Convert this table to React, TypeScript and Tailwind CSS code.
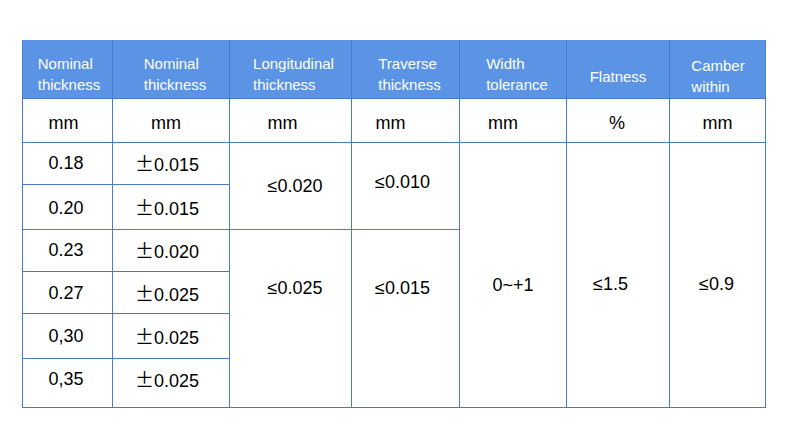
import React from "react";

const head = "flex items-center justify-center text-left bg-[#5b94e4] text-white text-[15px] leading-[21px]";
const cell = "flex items-center justify-center bg-white text-black text-[18px]";

function Pm({ v }: { v: string }) {
  return (
    <span>
      <span style={{ fontFamily: '"Noto Sans CJK SC", sans-serif' }} className="text-[19px]">±</span>
      {v}
    </span>
  );
}

export default function App() {
  const rows = [
    ["0.18", "0.015", ""],
    ["0.20", "0.015", "pt-[2px]"],
    ["0.23", "0.020", ""],
    ["0.27", "0.025", "pt-[2px]"],
    ["0,30", "0.025", "pt-[1px]"],
    ["0,35", "0.025", "pb-[7px]"],
  ];

  const units = [
    ["mm", "pr-[8px]"],
    ["mm", "pr-[10px]"],
    ["mm", "pr-[16px]"],
    ["mm", "pr-[30px]"],
    ["mm", "pr-[20px]"],
    ["%", "pr-[2px]"],
    ["mm", ""],
  ];

  return (
    <div className="w-[790px] h-[431px] bg-white pt-[40px] pl-[22px] font-['Liberation_Sans',Arial,sans-serif]">
      <div className="grid w-[744px] grid-cols-[89px_116px_121px_107px_106px_102px_95px] grid-rows-[58px_43px_41px_44px_41px_41px_44px_48px] gap-px bg-[#4a7bc8] px-px pb-px">
        {/* header */}
        <div className={head + " pt-[10px] pl-[3px]"}>Nominal<br />thickness</div>
        <div className={head + " pt-[10px] pl-[8px]"}>Nominal<br />thickness</div>
        <div className={head + " pt-[10px] pl-[6px]"}>Longitudinal<br />thickness</div>
        <div className={head + " pt-[10px] pl-[8px]"}>Traverse<br />thickness</div>
        <div className={head + " pt-[10px] pl-[8px]"}>Width<br />tolerance</div>
        <div className={head + " pt-[14px]"}>Flatness</div>
        <div className={head + " pt-[14px] pl-[1px]"}>Camber<br />within</div>

        {/* units */}
        {units.map(([u, pad], i) => (
          <div key={i} className={cell + " pt-[5px] " + pad}>{u}</div>
        ))}

        {/* first two columns */}
        {rows.map(([a, b, pad], i) => (
          <React.Fragment key={i}>
            <div className={cell + " pr-[3px] " + pad} style={{ gridColumn: 1, gridRow: i + 3 }}>{a}</div>
            <div className={cell + " pr-[8px] " + pad} style={{ gridColumn: 2, gridRow: i + 3 }}><Pm v={b} /></div>
          </React.Fragment>
        ))}

        <div className={cell + " col-start-3 row-start-3 row-span-2 pl-[9px]"}>≤0.020</div>
        <div className={cell + " col-start-4 row-start-3 row-span-2 pb-[8px] pr-[6px]"}>≤0.010</div>
        <div className={cell + " col-start-3 row-start-5 row-span-4 pb-[60px] pl-[9px]"}>≤0.025</div>
        <div className={cell + " col-start-4 row-start-5 row-span-4 pb-[60px] pr-[6px]"}>≤0.015</div>
        <div className={cell + " col-start-5 row-start-3 row-span-6 pt-[21px]"}>0~+1</div>
        <div className={cell + " col-start-6 row-start-3 row-span-6 pt-[19px] pr-[15px]"}>≤1.5</div>
        <div className={cell + " col-start-7 row-start-3 row-span-6 pt-[19px] pr-[2px]"}>≤0.9</div>
      </div>
    </div>
  );
}
